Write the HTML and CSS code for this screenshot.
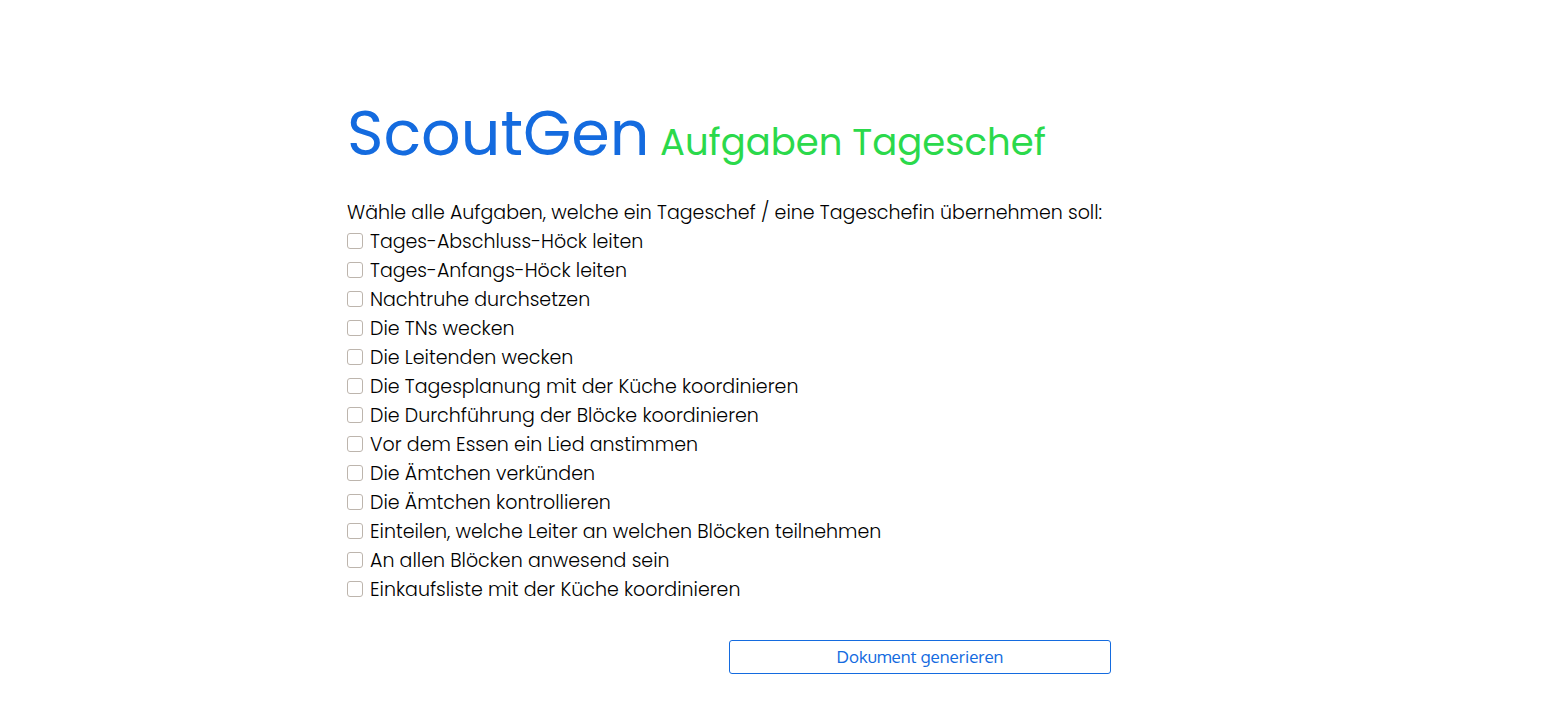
FILE: index.html
```html
<!DOCTYPE html>
<html lang="de">
<head>
<meta charset="utf-8">
<title>ScoutGen</title>
<link rel="stylesheet" href="styles.css">
</head>
<body>
<main class="page">
<form class="generator">
<h1 class="title"><span class="brand">ScoutGen</span> <span class="topic">Aufgaben Tageschef</span></h1>
<fieldset class="tasks">
<legend class="prompt">Wähle alle Aufgaben, welche ein Tageschef / eine Tageschefin übernehmen soll:</legend>
<label class="task"><input class="check" type="checkbox">Tages-Abschluss-Höck leiten</label>
<label class="task"><input class="check" type="checkbox">Tages-Anfangs-Höck leiten</label>
<label class="task"><input class="check" type="checkbox">Nachtruhe durchsetzen</label>
<label class="task"><input class="check" type="checkbox">Die TNs wecken</label>
<label class="task"><input class="check" type="checkbox">Die Leitenden wecken</label>
<label class="task"><input class="check" type="checkbox">Die Tagesplanung mit der Küche koordinieren</label>
<label class="task"><input class="check" type="checkbox">Die Durchführung der Blöcke koordinieren</label>
<label class="task"><input class="check" type="checkbox">Vor dem Essen ein Lied anstimmen</label>
<label class="task"><input class="check" type="checkbox">Die Ämtchen verkünden</label>
<label class="task"><input class="check" type="checkbox">Die Ämtchen kontrollieren</label>
<label class="task"><input class="check" type="checkbox">Einteilen, welche Leiter an welchen Blöcken teilnehmen</label>
<label class="task"><input class="check" type="checkbox">An allen Blöcken anwesend sein</label>
<label class="task"><input class="check" type="checkbox">Einkaufsliste mit der Küche koordinieren</label>
</fieldset>
<button class="submit" type="button">Dokument generieren</button>
</form>
</main>
</body>
</html>
```
FILE: styles.css
```css
* { box-sizing: border-box; }
body {
  margin: 0;
  background: #fff;
  color: #000;
  font-family: Poppins, "Open Sans", sans-serif;
  font-size: 19px;
  font-weight: 300;
  line-height: 29px;
}
.page {
  display: flex;
  justify-content: center;
  padding: 86px 92px 27px 0;
}
.generator {
  display: flex;
  flex-direction: column;
  width: 764px;
  max-width: 100%;
}
.title {
  margin: 0 0 8px;
  font-size: 40px;
  font-weight: 400;
  line-height: 96px;
}
.brand { color: #146bdf; font-size: 62px; }
.topic { color: #2bd94b; font-size: 37px; }
.tasks {
  display: flex;
  flex-direction: column;
  margin: 0;
  padding: 0;
  border: 0;
}
.prompt { padding: 0; }
.task {
  display: flex;
  align-items: center;
  gap: 7px;
}
.check {
  appearance: none;
  flex: none;
  width: 16px;
  height: 16px;
  margin: 0 0 1px;
  border: 1px solid #bdb5ad;
  border-radius: 3px;
  background: #fff;
}
.check:checked { background: #146bdf; }
.submit {
  align-self: flex-end;
  width: 50%;
  height: 34px;
  margin-top: 36px;
  border: 1px solid #146bdf;
  border-radius: 3px;
  background: #fff;
  color: #146bdf;
  font: 400 17px/24px Oxygen, "Noto Sans", sans-serif;
}
```
